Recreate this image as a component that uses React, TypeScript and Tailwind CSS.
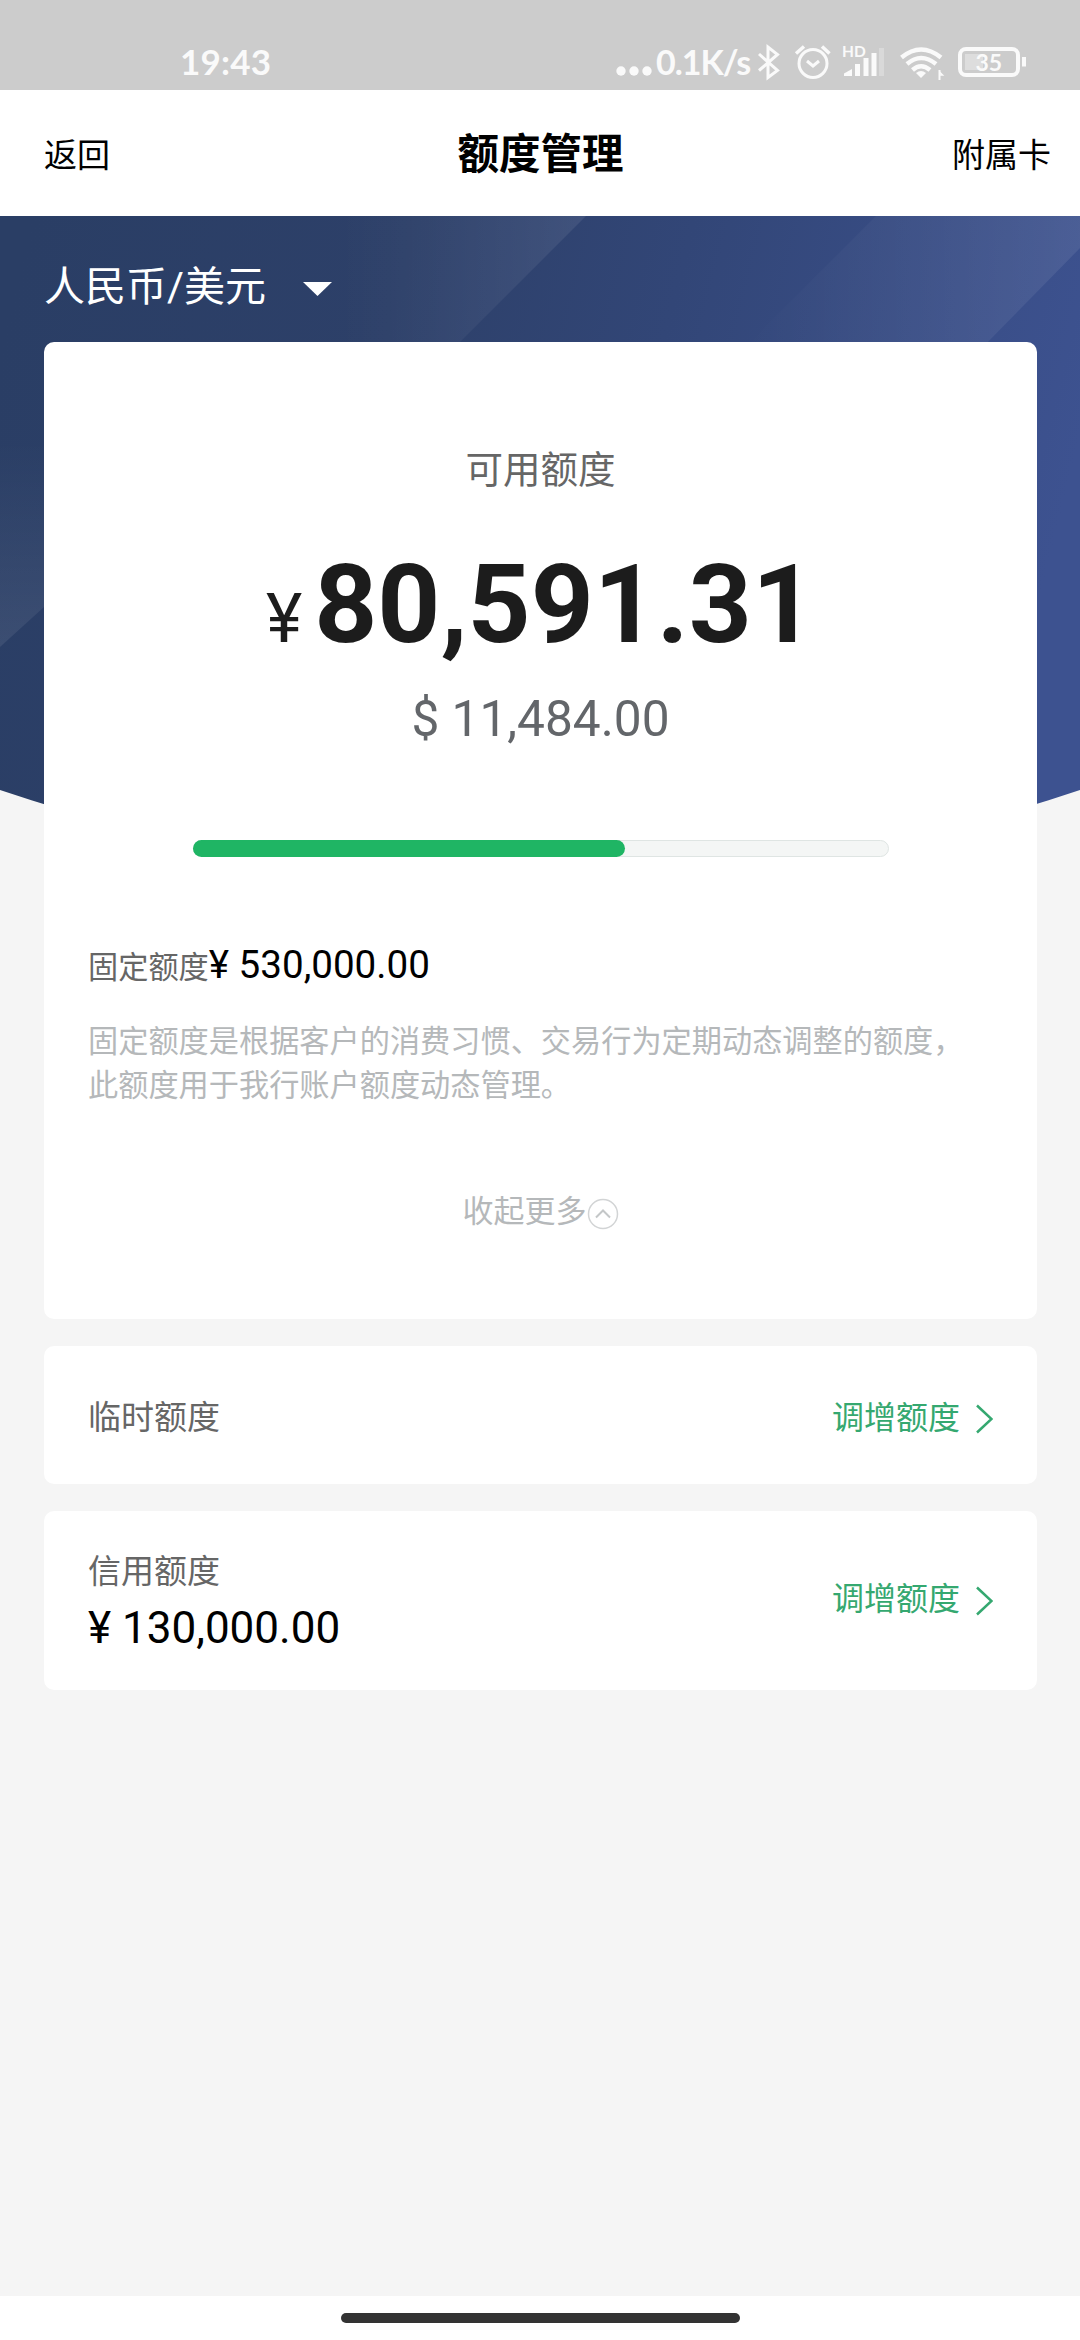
import React from 'react';

const StatusBar: React.FC = () => (
  <div className="flex h-[90px] items-start justify-between bg-[#cccccc] pl-[180px] text-[#fafafa]" style={{ fontFamily: "Lato, 'Noto Sans', sans-serif" }}>
    <span className="pt-[41px] text-[35px] leading-[40px] font-bold tracking-[0.2px]">19:43</span>
    <div className="flex pt-[42px]">
      <svg width="40" height="40" viewBox="0 0 40 40" fill="currentColor">
        <circle cx="5" cy="29" r="4.7" />
        <circle cx="18" cy="29" r="4.7" />
        <circle cx="31" cy="29" r="4.7" />
      </svg>
      <span className="w-[98px] text-[34px] leading-[40px] font-bold tracking-[-1px] whitespace-nowrap">0.1K/s</span>
      <svg className="-mt-[42px]" width="326" height="90" viewBox="754 0 326 90" fill="none" stroke="currentColor">
        {/* bluetooth */}
        <path d="M759 54 L777.5 70.500 L768 77.5 V47 L777.5 54.5 L759 70.500" strokeWidth="3" />
        {/* alarm */}
        <circle cx="813" cy="63.5" r="14" strokeWidth="3" />
        <path d="M807 61 L813 66 L819 61" strokeWidth="3" />
        <path d="M796 53.500 L804 46.5 M822 46.5 L829.5 53.500" strokeWidth="3.500" />
        {/* signal */}
        <text x="842" y="57" fontSize="15.500" fontWeight="700" fill="currentColor" stroke="none">HD</text>
        <path d="M844 76 V73.5 L852 69 V76 Z" fill="currentColor" stroke="none" />
        <path d="M857.500 76 V64 M866 76 V58 M874 76 V53" strokeWidth="5" />
        <path d="M881.5 76 V48" strokeWidth="5" strokeOpacity="0.3" />
        {/* wifi */}
        <path d="M901.500 57.500 Q921 41.500 941 57.500" strokeWidth="4.5" />
        <path d="M907 64 Q921 52 936 64" strokeWidth="4.5" />
        <path d="M912.5 70 Q921 62.500 930 70" strokeWidth="4.5" />
        <path d="M916 73 Q921 69 926 73 L921 78 Z" fill="currentColor" stroke="none" />
        <path d="M939.5 70 V80" strokeWidth="2" />
        <path d="M939.5 72 L942.500 75 H939.500" strokeWidth="1.500" />
        {/* battery */}
        <rect x="965" y="54" width="18" height="16" fill="#dddddd" stroke="none" />
        <rect x="960" y="49" width="58" height="26" rx="6" strokeWidth="4" />
        <path d="M1024 57 V66.500" strokeWidth="4" />
        <text x="975.500" y="71" fontSize="23" fontWeight="700" fill="currentColor" stroke="none">35</text>
      </svg>
    </div>
  </div>
);

const Header: React.FC = () => (
  <header className="grid h-[126px] grid-cols-[200px_1fr_200px] items-center bg-white pt-[5px] pr-[29px] pl-[44px] text-[33px] text-black">
    <span>返回</span>
    <h1 className="pr-[14px] text-center text-[41.5px] font-bold">额度管理</h1>
    <span className="text-right">附属卡</span>
  </header>
);

const BannerBackground: React.FC = () => (
  <svg className="absolute top-0 left-0" width="1080" height="640" viewBox="0 216 1080 640">
    <defs>
      <linearGradient id="base" x1="0" y1="0.2" x2="1" y2="0.35">
        <stop offset="0" stopColor="#2a3e65" />
        <stop offset="0.35" stopColor="#2d4069" />
        <stop offset="0.6" stopColor="#324677" />
        <stop offset="1" stopColor="#3d5290" />
      </linearGradient>
      <linearGradient id="band" x1="0" y1="0" x2="1" y2="0">
        <stop offset="0" stopColor="#ffffff" stopOpacity="0" />
        <stop offset="1" stopColor="#ffffff" stopOpacity="0.08" />
      </linearGradient>
      <linearGradient id="bandDown" x1="0" y1="0" x2="0" y2="1">
        <stop offset="0" stopColor="#ffffff" stopOpacity="0" />
        <stop offset="1" stopColor="#ffffff" stopOpacity="0.08" />
      </linearGradient>
      <clipPath id="curve">
        <path d="M0 216 H1080 V790 Q540 972 0 790 Z" />
      </clipPath>
    </defs>
    <g clipPath="url(#curve)">
      <rect y="216" width="1080" height="640" fill="url(#base)" />
      <path d="M340 216 H586 L450 352 H340 Z" fill="url(#band)" />
      <path d="M0 440 H44 V607 L0 647 Z" fill="url(#bandDown)" />
      <path d="M876 216 H1080 V248 L980 350 H742 Z" fill="url(#band)" />
    </g>
  </svg>
);

const LimitLink: React.FC = () => (
  <div className="flex items-center text-[32px] leading-[44px] text-[#35a870]">
    <span>调增额度</span>
    <svg className="mt-[3px] ml-[16px]" width="17" height="30" viewBox="0 0 17 30" fill="none" stroke="currentColor" strokeWidth="2.500">
      <path d="M1 1.500 L15.500 15 L1 28.500" />
    </svg>
  </div>
);

const App: React.FC = () => {
  return (
    <div className="flex h-[2340px] w-[1080px] flex-col overflow-hidden bg-[#f5f5f5]" style={{ fontFamily: "Roboto, 'Noto Sans CJK SC', sans-serif" }}>
      <StatusBar />
      <Header />

      <main className="relative flex-1">
        <BannerBackground />

        <div className="relative px-[44px]">
          <div className="flex h-[126px] items-center pt-[17px] text-[41px] text-white">
            <span>人民币/美元</span>
            <svg className="mt-[3px] ml-[37px]" width="29" height="14" viewBox="0 0 29 14" fill="currentColor">
              <path d="M0 0 H29 L14.500 14 Z" />
            </svg>
          </div>

          {/* Available limit */}
          <section className="flex h-[977px] w-[993px] flex-col items-center rounded-[10px] bg-white px-[44px] pt-[100px]">
            <p className="text-[37.500px] leading-[56px] text-[#666666]">可用额度</p>
            <p className="mt-[42px] flex items-baseline leading-[130px] text-[#1c1c1c]">
              <span className="mr-[12px] text-[69px] leading-none">¥</span>
              <span className="text-[110px] font-bold">80,591.31</span>
            </p>
            <p className="mt-[19px] text-[49.600px] leading-[60px] text-[#63666a]">$ 11,484.00</p>

            <div className="mt-[91px] h-[17px] w-[696px] rounded-full border border-[#dfe5e3] bg-[#f4f6f5]">
              <div className="-mt-px -ml-px h-[17px] w-[432px] rounded-full bg-[#1fb564]" />
            </div>

            <div className="mt-[80px] flex items-baseline self-start leading-[56px]">
              <span className="text-[30.200px] text-[#666666]">固定额度</span>
              <span className="text-[38.600px] text-black">¥ 530,000.00</span>
            </div>
            <p className="mt-[24px] w-full text-[30.200px] leading-[44px] whitespace-nowrap text-[#b5b8ba]">
              固定额度是根据客户的消费习惯、交易行为定期动态调整的额度，
              <br />
              此额度用于我行账户额度动态管理。
            </p>
            <button className="mt-[81px] flex items-center text-[31px] leading-[46px] text-[#b5b8ba]">
              收起更多
              <svg className="mt-[4px]" width="32" height="32" viewBox="0 0 32 32" fill="none">
                <circle cx="16" cy="16" r="14.500" stroke="#d2d4d5" strokeWidth="1.500" />
                <path d="M9 19.500 L16 12.500 L23 19.500" stroke="#c4c7c8" strokeWidth="2" />
              </svg>
            </button>
          </section>

          {/* Temporary limit */}
          <section className="mt-[27px] flex h-[138px] w-[993px] items-center justify-between rounded-[10px] bg-white px-[44px] pt-[5px]">
            <span className="text-[33px] text-[#666666]">临时额度</span>
            <LimitLink />
          </section>

          {/* Credit limit */}
          <section className="mt-[27px] flex h-[179px] w-[993px] items-start justify-between rounded-[10px] bg-white px-[44px] pt-[37px]">
            <div>
              <p className="text-[33px] leading-[48px] text-[#666666]">信用额度</p>
              <p className="mt-[2px] text-[44px] leading-[60px] text-black">¥ 130,000.00</p>
            </div>
            <div className="pt-[29px]">
              <LimitLink />
            </div>
          </section>
        </div>
      </main>

      {/* System gesture bar */}
      <footer className="flex h-[44px] justify-center bg-white pt-[17px]">
        <div className="h-[10px] w-[399px] rounded-full bg-[#333333]" />
      </footer>
    </div>
  );
};

export default App;
